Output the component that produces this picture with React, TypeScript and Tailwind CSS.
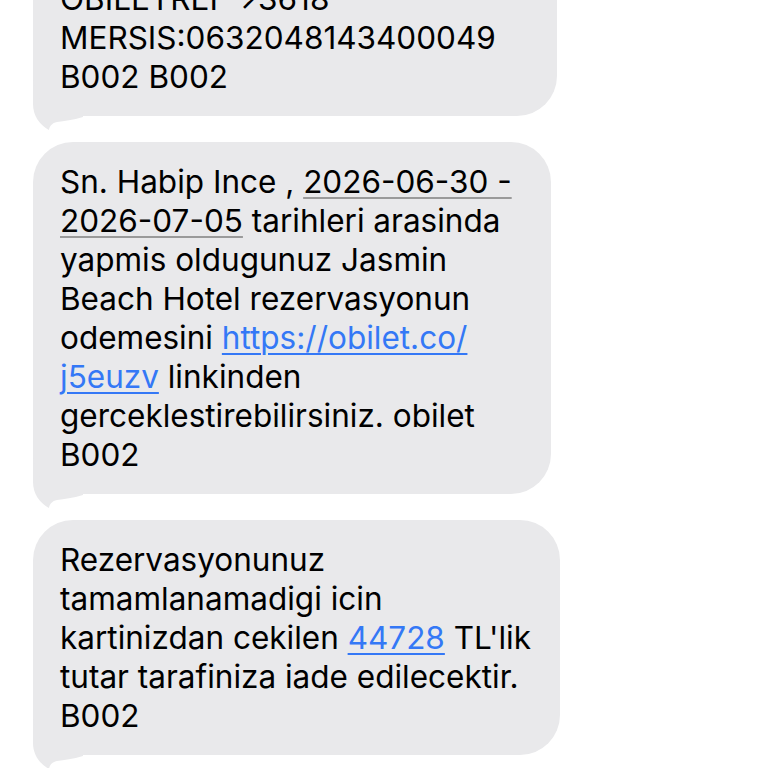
const font = { fontFamily: 'Inter, "Liberation Sans", sans-serif' }

function Tail() {
  return (
    <svg
      className="absolute left-0 bottom-[-14px]"
      width="50"
      height="54"
      viewBox="0 0 50 54"
    >
      <path
        d="M0 0 L0 28 C0 40 7 49 16 54 C16.5 50 19 47 24 46 C31 45 40 44 50 41 L50 0 Z"
        fill="#e9e9eb"
      />
    </svg>
  )
}

function Bubble({ width, children }: { width: string; children: React.ReactNode }) {
  return (
    <div className={`relative ${width}`}>
      <div className="relative z-10 rounded-[40px] bg-[#e9e9eb] px-[27px] py-[20px] text-[31.5px] leading-[39px] text-black whitespace-nowrap">
        {children}
      </div>
      <Tail />
    </div>
  )
}

const Link = ({ children }: { children: React.ReactNode }) => (
  <span className="text-[#3478f6] underline decoration-[1.5px] underline-offset-[4px]">{children}</span>
)

// dates are picked up by the data detector: gray underline, black text
const DateLink = ({ children }: { children: React.ReactNode }) => (
  <span className="underline decoration-[#9a9a9a] decoration-[1.5px] underline-offset-[4px]">{children}</span>
)

export default function App() {
  return (
    <div className="h-[768px] w-[768px] overflow-hidden bg-white" style={font}>
      <div className="flex flex-col gap-[26px] pl-[33px] mt-[-80px]">
        <Bubble width="w-[524px]">
          BILET NO: 76512339
          <br />
          OBILETREF-&gt;3618
          <br />
          MERSIS:0632048143400049
          <br />
          B002 B002
        </Bubble>
        <Bubble width="w-[518px]">
          Sn. Habip Ince , <DateLink>2026-06-30 -</DateLink>
          <br />
          <DateLink>2026-07-05</DateLink> tarihleri arasinda
          <br />
          yapmis oldugunuz Jasmin
          <br />
          Beach Hotel rezervasyonun
          <br />
          odemesini <Link>https://obilet.co/</Link>
          <br />
          <Link>j5euzv</Link> linkinden
          <br />
          gerceklestirebilirsiniz. obilet
          <br />
          B002
        </Bubble>
        <Bubble width="w-[527px]">
          Rezervasyonunuz
          <br />
          tamamlanamadigi icin
          <br />
          kartinizdan cekilen <Link>44728</Link> TL'lik
          <br />
          tutar tarafiniza iade edilecektir.
          <br />
          B002
        </Bubble>
      </div>
    </div>
  )
}
